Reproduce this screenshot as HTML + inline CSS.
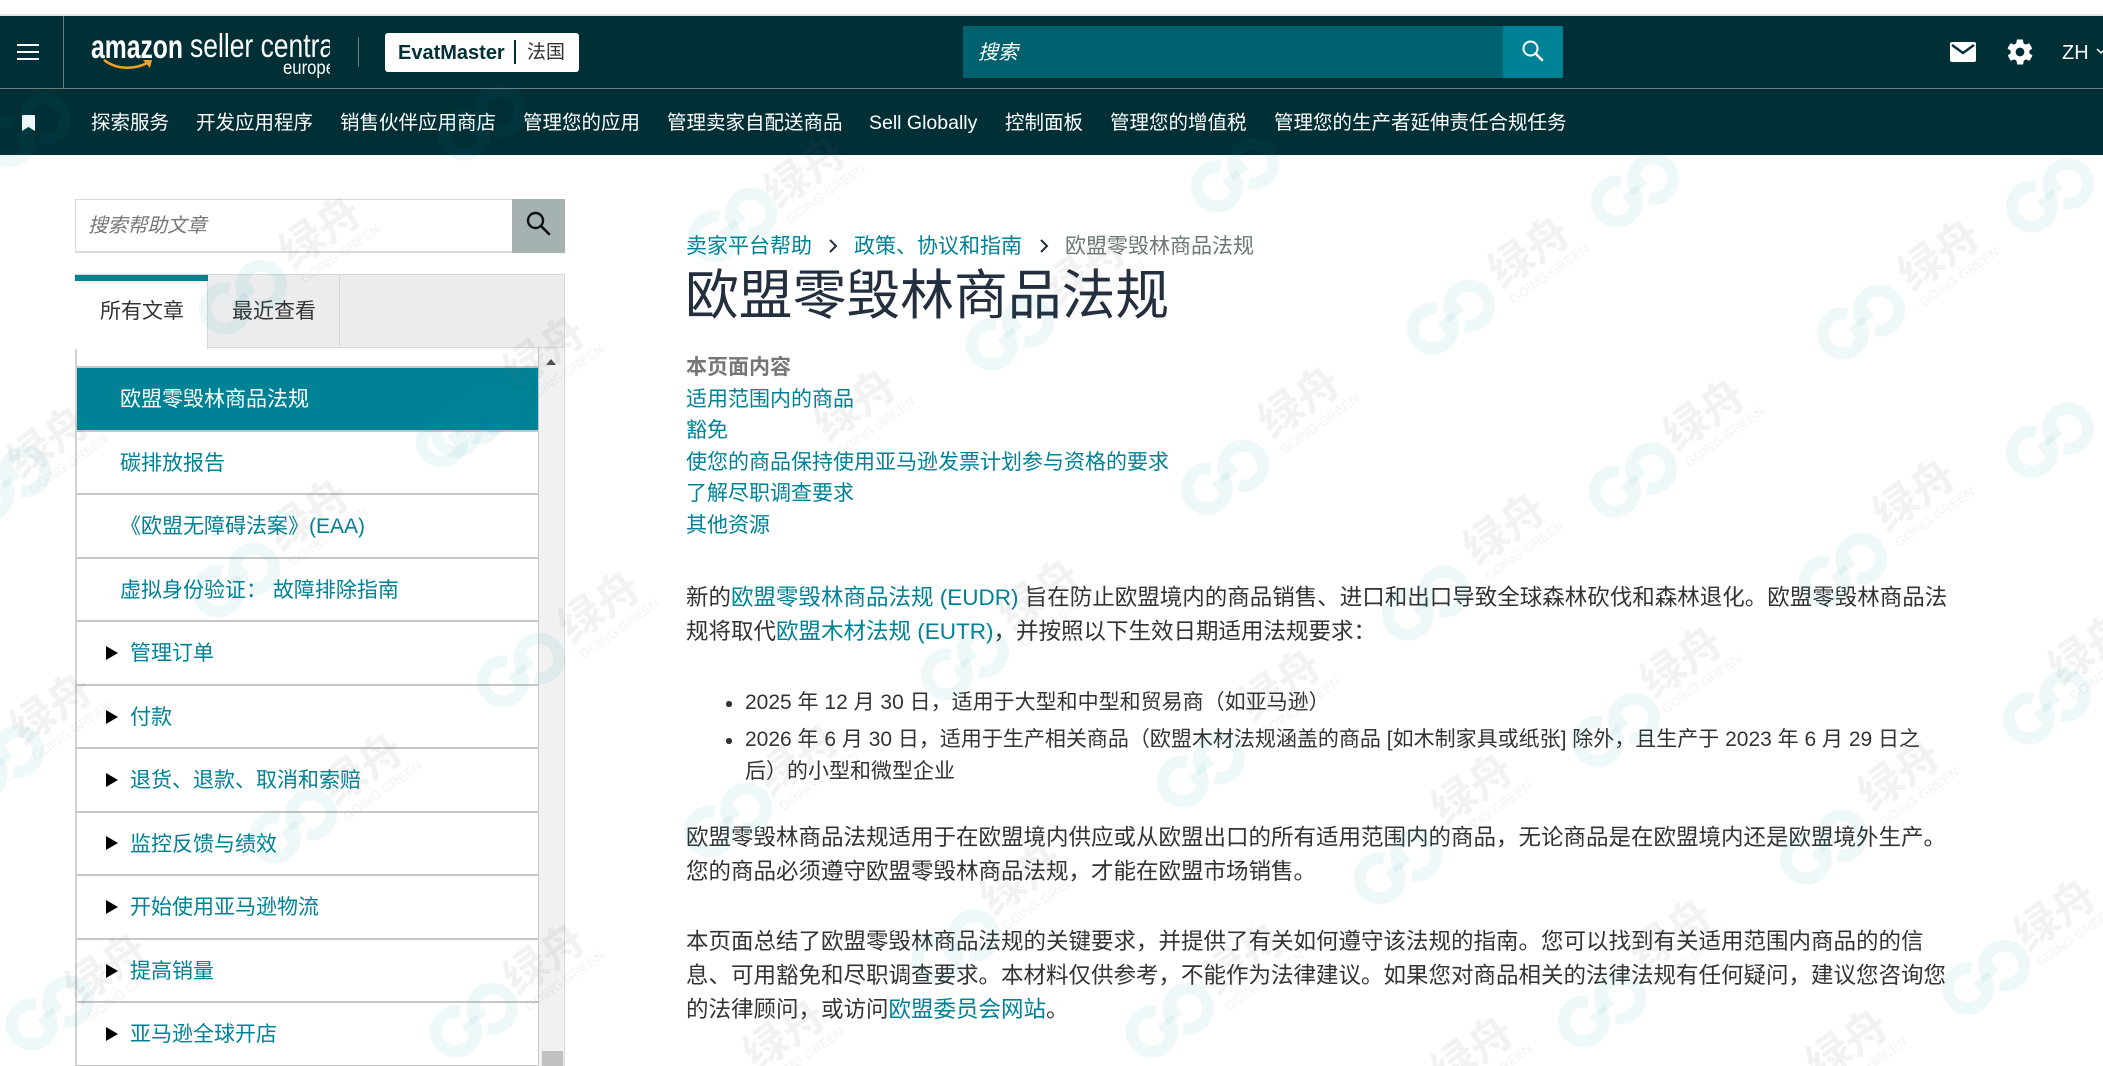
<!DOCTYPE html>
<html lang="zh">
<head>
<meta charset="utf-8">
<title>欧盟零毁林商品法规</title>
<style>
*{box-sizing:border-box}
html,body{margin:0;padding:0;width:2103px;height:1066px;overflow:hidden;background:#fff}
body{position:relative;font-family:"Liberation Sans","Noto Sans CJK SC",sans-serif;color:#333}
a{color:#008296;text-decoration:none}
.abs{position:absolute}
.t{position:absolute;white-space:nowrap;line-height:40px;height:40px;margin-top:1.5px}
.p{font-size:22.5px;left:686px;color:#333;margin-top:.3px}
.b{font-size:21px;left:745px;color:#333;margin-top:1px}
.toc{font-size:21px;left:686px}
.nav{font-size:19.5px;color:#fff;top:102px;margin-top:1px}
.hd{margin-top:.5px}
.sep{position:absolute;left:76px;width:462px;height:2px;background:#c6c8c8}
.it{position:absolute;font-size:21px;white-space:nowrap;line-height:40px;color:#008296;margin-top:1.5px}
.tri{position:absolute;left:106px;width:0;height:0;border-left:12px solid #000;border-top:7px solid transparent;border-bottom:7px solid transparent}
.dot{position:absolute;left:726px;width:5.5px;height:5.5px;border-radius:50%;background:#333}
</style>
</head>
<body>
<!-- top strip -->
<div class="abs" style="left:0;top:14px;width:2103px;height:2px;background:#e6e6e6"></div>
<!-- header -->
<div class="abs" style="left:0;top:16px;width:2103px;height:139px;background:#002f36"></div>
<div class="abs" style="left:0;top:88px;width:2103px;height:1px;background:#6f7f81"></div>
<div class="abs" style="left:63px;top:16px;width:1px;height:72px;background:#6f7f81"></div>
<div class="abs" style="left:17px;top:44px;width:22px;height:2px;background:#fff"></div>
<div class="abs" style="left:17px;top:51px;width:22px;height:2px;background:#fff"></div>
<div class="abs" style="left:17px;top:58px;width:22px;height:2px;background:#fff"></div>
<!-- logo -->
<svg class="abs" style="left:85px;top:30px" width="245" height="48" viewBox="0 0 245 48">
<text x="6" y="28" font-family="Liberation Sans" font-size="33" font-weight="bold" fill="#fff" textLength="92" lengthAdjust="spacingAndGlyphs">amazon</text>
<text x="105" y="27" font-family="Liberation Sans" font-size="33" fill="#fff" textLength="150" lengthAdjust="spacingAndGlyphs">seller central</text>
<text x="198" y="44" font-family="Liberation Sans" font-size="19" fill="#fff" textLength="52" lengthAdjust="spacingAndGlyphs">europe</text>
<path d="M19 30 C32 40 50 40 64 32" fill="none" stroke="#f3a02c" stroke-width="2.6"/>
<path d="M58 30 L67 30 L65 38 Z" fill="#f3a02c"/>
</svg>
<div class="abs" style="left:358px;top:37px;width:1px;height:30px;background:#6f7f81"></div>
<div class="abs" style="left:385px;top:33px;width:194px;height:39px;background:#fff;border-radius:3px"></div>
<div class="t hd" style="left:398px;top:32px;font-size:20px;font-weight:bold;color:#002f36">EvatMaster</div>
<div class="abs" style="left:514px;top:40px;width:1.5px;height:24px;background:#002f36"></div>
<div class="t hd" style="left:527px;top:32px;font-size:19px;color:#333">法国</div>
<!-- top search -->
<div class="abs" style="left:963px;top:26px;width:540px;height:52px;background:#00626f"></div>
<div class="abs" style="left:1503px;top:26px;width:60px;height:52px;background:#008296"></div>
<div class="t hd" style="left:978px;top:32px;font-size:20px;font-style:italic;color:#fff">搜索</div>
<svg class="abs" style="left:1520px;top:38px" width="26" height="26" viewBox="0 0 26 26"><circle cx="10.5" cy="10.5" r="7" fill="none" stroke="#fff" stroke-width="2"/><path d="M15.5 15.5 L22 22" stroke="#fff" stroke-width="2.6" stroke-linecap="round"/></svg>
<!-- right icons -->
<svg class="abs" style="left:1950px;top:42px" width="26" height="20" viewBox="0 0 26 20"><rect width="26" height="20" rx="2" fill="#fff"/><path d="M2 3 L13 11 L24 3" fill="none" stroke="#002f36" stroke-width="2.4"/></svg>
<svg class="abs" style="left:2005px;top:37px" width="30" height="30" viewBox="0 0 24 24"><path fill="#fff" d="M19.4 13c.1-.3.1-.7.1-1s0-.7-.1-1l2.1-1.6c.2-.2.2-.4.1-.6l-2-3.5c-.1-.2-.4-.3-.6-.2l-2.5 1c-.5-.4-1.1-.7-1.7-1l-.4-2.6c0-.3-.2-.5-.5-.5h-4c-.3 0-.5.2-.5.4l-.4 2.7c-.6.2-1.2.6-1.7 1l-2.5-1c-.2-.1-.5 0-.6.2l-2 3.5c-.1.2-.1.5.1.6L4.6 11c-.1.3-.1.7-.1 1s0 .7.1 1l-2.1 1.6c-.2.2-.2.4-.1.6l2 3.5c.1.2.4.3.6.2l2.5-1c.5.4 1.1.7 1.7 1l.4 2.6c0 .3.2.5.5.5h4c.3 0 .5-.2.5-.4l.4-2.7c.6-.2 1.2-.6 1.7-1l2.5 1c.2.1.5 0 .6-.2l2-3.5c.1-.2.1-.5-.1-.6L19.4 13zM12 15.5c-1.9 0-3.5-1.6-3.5-3.5s1.6-3.5 3.5-3.5 3.5 1.6 3.5 3.5-1.6 3.5-3.5 3.5z"/></svg>
<div class="t hd" style="left:2062px;top:32px;font-size:20px;color:#fff">ZH</div>
<svg class="abs" style="left:2096px;top:47px" width="7" height="8" viewBox="0 0 7 8"><path d="M1 2 L5 6 L9 2" fill="none" stroke="#fff" stroke-width="1.5"/></svg>
<!-- nav -->
<svg class="abs" style="left:22px;top:115px" width="13" height="16" viewBox="0 0 13 16"><path d="M0 1 Q0 0 1 0 H12 Q13 0 13 1 V16 L6.5 12 L0 16 Z" fill="#fff"/></svg>
<div class="t nav" style="left:91px">探索服务</div>
<div class="t nav" style="left:196px">开发应用程序</div>
<div class="t nav" style="left:340px">销售伙伴应用商店</div>
<div class="t nav" style="left:523px">管理您的应用</div>
<div class="t nav" style="left:667px">管理卖家自配送商品</div>
<div class="t nav" style="left:869px">Sell Globally</div>
<div class="t nav" style="left:1005px">控制面板</div>
<div class="t nav" style="left:1110px">管理您的增值税</div>
<div class="t nav" style="left:1274px">管理您的生产者延伸责任合规任务</div>

<!-- sidebar search -->
<div class="abs" style="left:75px;top:199px;width:438px;height:54px;border:1.5px solid #d9dcdc;border-bottom:2px solid #d5dbdb;background:#fff"></div>
<div class="abs" style="left:512px;top:199px;width:53px;height:54px;background:#a6b2b1"></div>
<div class="t" style="left:88px;top:204px;font-size:19.8px;font-style:italic;color:#767676">搜索帮助文章</div>
<svg class="abs" style="left:525px;top:210px" width="26" height="26" viewBox="0 0 26 26"><circle cx="10.5" cy="10.5" r="7.5" fill="none" stroke="#0f1111" stroke-width="2.4"/><path d="M16 16 L24 24" stroke="#0f1111" stroke-width="2.6" stroke-linecap="round"/></svg>
<!-- tabs -->
<div class="abs" style="left:75px;top:274px;width:490px;height:74px;background:#eaeced;border:1px solid #d5d9d9"></div>
<div class="abs" style="left:75px;top:275px;width:133px;height:74px;background:#fff;border-right:1px solid #d5d9d9"></div>
<div class="abs" style="left:75px;top:275px;width:133px;height:6px;background:#00818f"></div>
<div class="abs" style="left:339px;top:275px;width:1px;height:73px;background:#d5d9d9"></div>
<div class="t" style="left:100px;top:290px;font-size:21px;color:#333">所有文章</div>
<div class="t" style="left:232px;top:290px;font-size:21px;color:#333">最近查看</div>
<!-- list frame + scrollbar -->
<div class="abs" style="left:75px;top:349px;width:1.5px;height:717px;background:#d0d2d2"></div>
<div class="abs" style="left:538px;top:348px;width:27px;height:718px;background:#f1f1f1;border-left:1px solid #c9cbcb;border-right:1px solid #d5d9d9"></div>
<div class="abs" style="left:545.5px;top:359px;width:0;height:0;border-left:5.5px solid transparent;border-right:5.5px solid transparent;border-bottom:6px solid #505050"></div>
<div class="abs" style="left:542px;top:1051px;width:21px;height:15px;background:#c1c1c1"></div>
<div class="sep" style="top:366px"></div>
<div class="abs" style="left:76.5px;top:368px;width:461.5px;height:62px;background:#008296"></div>
<div class="sep" style="top:430px"></div>
<div class="sep" style="top:493px"></div>
<div class="sep" style="top:556.5px"></div>
<div class="sep" style="top:620px"></div>
<div class="sep" style="top:683.5px"></div>
<div class="sep" style="top:747px"></div>
<div class="sep" style="top:810.5px"></div>
<div class="sep" style="top:874px"></div>
<div class="sep" style="top:937.5px"></div>
<div class="sep" style="top:1001px"></div>
<div class="sep" style="top:1064.5px"></div>
<div class="it" style="left:120px;top:378px;color:#fff">欧盟零毁林商品法规</div>
<div class="it" style="left:120px;top:442px">碳排放报告</div>
<div class="it" style="left:120px;top:505px">《欧盟无障碍法案》(EAA)</div>
<div class="it" style="left:120px;top:569px">虚拟身份验证： 故障排除指南</div>
<div class="tri" style="top:645.5px"></div><div class="it" style="left:130px;top:632px">管理订单</div>
<div class="tri" style="top:709.5px"></div><div class="it" style="left:130px;top:696px">付款</div>
<div class="tri" style="top:772.5px"></div><div class="it" style="left:130px;top:759px">退货、退款、取消和索赔</div>
<div class="tri" style="top:836px"></div><div class="it" style="left:130px;top:823px">监控反馈与绩效</div>
<div class="tri" style="top:899.5px"></div><div class="it" style="left:130px;top:886px">开始使用亚马逊物流</div>
<div class="tri" style="top:963.5px"></div><div class="it" style="left:130px;top:950px">提高销量</div>
<div class="tri" style="top:1026.5px"></div><div class="it" style="left:130px;top:1013px">亚马逊全球开店</div>

<!-- breadcrumb -->
<div class="t toc" style="top:225px"><a href="#">卖家平台帮助</a></div>
<svg class="abs" style="left:828px;top:238px" width="10" height="16" viewBox="0 0 10 16"><path d="M2 2 L8 8 L2 14" fill="none" stroke="#232f3e" stroke-width="2"/></svg>
<div class="t" style="left:854px;top:225px;font-size:21px"><a href="#">政策、协议和指南</a></div>
<svg class="abs" style="left:1039px;top:238px" width="10" height="16" viewBox="0 0 10 16"><path d="M2 2 L8 8 L2 14" fill="none" stroke="#232f3e" stroke-width="2"/></svg>
<div class="t" style="left:1065px;top:225px;font-size:21px;color:#6c7778">欧盟零毁林商品法规</div>
<div class="t" style="left:685px;top:264px;height:60px;line-height:60px;font-size:53.8px;color:#232f3e">欧盟零毁林商品法规</div>
<!-- toc -->
<div class="t toc" style="top:347px;font-weight:bold;font-size:21px;color:#767676;margin-top:.5px">本页面内容</div>
<div class="t toc" style="top:378px"><a href="#">适用范围内的商品</a></div>
<div class="t toc" style="top:409px"><a href="#">豁免</a></div>
<div class="t toc" style="top:441px"><a href="#">使您的商品保持使用亚马逊发票计划参与资格的要求</a></div>
<div class="t toc" style="top:472px"><a href="#">了解尽职调查要求</a></div>
<div class="t toc" style="top:504px"><a href="#">其他资源</a></div>
<!-- body -->
<div class="t p" style="top:578px">新的<a href="#">欧盟零毁林商品法规 (EUDR)</a> 旨在防止欧盟境内的商品销售、进口和出口导致全球森林砍伐和森林退化。欧盟零毁林商品法</div>
<div class="t p" style="top:612px">规将取代<a href="#">欧盟木材法规 (EUTR)</a>，并按照以下生效日期适用法规要求：</div>
<div class="dot" style="top:701px"></div>
<div class="t b" style="top:682px">2025 年 12 月 30 日，适用于大型和中型和贸易商（如亚马逊）</div>
<div class="dot" style="top:738px"></div>
<div class="t b" style="top:719px">2026 年 6 月 30 日，适用于生产相关商品（欧盟木材法规涵盖的商品 [如木制家具或纸张] 除外，且生产于 2023 年 6 月 29 日之</div>
<div class="t b" style="top:751px">后）的小型和微型企业</div>
<div class="t p" style="top:818px">欧盟零毁林商品法规适用于在欧盟境内供应或从欧盟出口的所有适用范围内的商品，无论商品是在欧盟境内还是欧盟境外生产。</div>
<div class="t p" style="top:852px">您的商品必须遵守欧盟零毁林商品法规，才能在欧盟市场销售。</div>
<div class="t p" style="top:922px">本页面总结了欧盟零毁林商品法规的关键要求，并提供了有关如何遵守该法规的指南。您可以找到有关适用范围内商品的的信</div>
<div class="t p" style="top:956px">息、可用豁免和尽职调查要求。本材料仅供参考，不能作为法律建议。如果您对商品相关的法律法规有任何疑问，建议您咨询您</div>
<div class="t p" style="top:990px">的法律顾问，或访问<a href="#">欧盟委员会网站</a>。</div>

<!-- watermark overlay -->
<svg class="abs" style="left:0;top:0;pointer-events:none" width="2103" height="1066" viewBox="0 0 2103 1066">
<defs>
<g id="lg" fill="none" stroke="#0a8fa3" stroke-opacity=".065" stroke-width="12" transform="rotate(-38)">
<path d="M-6 -15 A20 20 0 1 0 -2 3 L-14 3"/>
<path d="M6 15 A20 20 0 1 0 2 -3 L14 -3"/>
</g>
</defs>
<use href="#lg" x="243" y="297"/><use href="#lg" x="474" y="420"/><use href="#lg" x="236" y="580"/><use href="#lg" x="521" y="670"/><use href="#lg" x="293" y="826"/><use href="#lg" x="474" y="1020"/><use href="#lg" x="50" y="1013"/><use href="#lg" x="27" y="130"/><use href="#lg" x="482" y="123"/><use href="#lg" x="7" y="483"/><use href="#lg" x="0" y="763"/><use href="#lg" x="460" y="430"/><use href="#lg" x="733" y="225"/><use href="#lg" x="1010" y="333"/><use href="#lg" x="1235" y="175"/><use href="#lg" x="1451" y="317"/><use href="#lg" x="1635" y="190"/><use href="#lg" x="1861" y="322"/><use href="#lg" x="2050" y="195"/><use href="#lg" x="1225" y="477"/><use href="#lg" x="1633" y="480"/><use href="#lg" x="2050" y="440"/><use href="#lg" x="1426" y="603"/><use href="#lg" x="1843" y="570"/><use href="#lg" x="965" y="663"/><use href="#lg" x="1201" y="770"/><use href="#lg" x="728" y="820"/><use href="#lg" x="1616" y="730"/><use href="#lg" x="2047" y="707"/><use href="#lg" x="1398" y="867"/><use href="#lg" x="1824" y="847"/><use href="#lg" x="956" y="947"/><use href="#lg" x="1170" y="1020"/><use href="#lg" x="1602" y="1010"/><use href="#lg" x="1986" y="977"/>
<g font-family="'Liberation Sans','Noto Sans CJK SC',sans-serif" fill="#666" fill-opacity=".085" text-anchor="middle">
<g transform="translate(326,240) rotate(-35)"><text font-size="44" font-weight="bold" y="5">绿舟</text><text font-size="13" x="4" y="24">GOING GREEN</text></g>
<g transform="translate(54,450) rotate(-35)"><text font-size="44" font-weight="bold" y="5">绿舟</text><text font-size="13" x="4" y="24">GOING GREEN</text></g>
<g transform="translate(550,360) rotate(-35)"><text font-size="44" font-weight="bold" y="5">绿舟</text><text font-size="13" x="4" y="24">GOING GREEN</text></g>
<g transform="translate(314,523) rotate(-35)"><text font-size="44" font-weight="bold" y="5">绿舟</text><text font-size="13" x="4" y="24">GOING GREEN</text></g>
<g transform="translate(605,615) rotate(-35)"><text font-size="44" font-weight="bold" y="5">绿舟</text><text font-size="13" x="4" y="24">GOING GREEN</text></g>
<g transform="translate(57,717) rotate(-35)"><text font-size="44" font-weight="bold" y="5">绿舟</text><text font-size="13" x="4" y="24">GOING GREEN</text></g>
<g transform="translate(368,777) rotate(-35)"><text font-size="44" font-weight="bold" y="5">绿舟</text><text font-size="13" x="4" y="24">GOING GREEN</text></g>
<g transform="translate(112,977) rotate(-35)"><text font-size="44" font-weight="bold" y="5">绿舟</text><text font-size="13" x="4" y="24">GOING GREEN</text></g>
<g transform="translate(550,967) rotate(-35)"><text font-size="44" font-weight="bold" y="5">绿舟</text><text font-size="13" x="4" y="24">GOING GREEN</text></g>
<g transform="translate(811,180) rotate(-35)"><text font-size="44" font-weight="bold" y="5">绿舟</text><text font-size="13" x="4" y="24">GOING GREEN</text></g>
<g transform="translate(1091,277) rotate(-35)"><text font-size="44" font-weight="bold" y="5">绿舟</text><text font-size="13" x="4" y="24">GOING GREEN</text></g>
<g transform="translate(861,413) rotate(-35)"><text font-size="44" font-weight="bold" y="5">绿舟</text><text font-size="13" x="4" y="24">GOING GREEN</text></g>
<g transform="translate(804,767) rotate(-35)"><text font-size="44" font-weight="bold" y="5">绿舟</text><text font-size="13" x="4" y="24">GOING GREEN</text></g>
<g transform="translate(1045,603) rotate(-35)"><text font-size="44" font-weight="bold" y="5">绿舟</text><text font-size="13" x="4" y="24">GOING GREEN</text></g>
<g transform="translate(1286,693) rotate(-35)"><text font-size="44" font-weight="bold" y="5">绿舟</text><text font-size="13" x="4" y="24">GOING GREEN</text></g>
<g transform="translate(1027,887) rotate(-35)"><text font-size="44" font-weight="bold" y="5">绿舟</text><text font-size="13" x="4" y="24">GOING GREEN</text></g>
<g transform="translate(1250,967) rotate(-35)"><text font-size="44" font-weight="bold" y="5">绿舟</text><text font-size="13" x="4" y="24">GOING GREEN</text></g>
<g transform="translate(790,1043) rotate(-35)"><text font-size="44" font-weight="bold" y="5">绿舟</text><text font-size="13" x="4" y="24">GOING GREEN</text></g>
<g transform="translate(1535,260) rotate(-35)"><text font-size="44" font-weight="bold" y="5">绿舟</text><text font-size="13" x="4" y="24">GOING GREEN</text></g>
<g transform="translate(1945,263) rotate(-35)"><text font-size="44" font-weight="bold" y="5">绿舟</text><text font-size="13" x="4" y="24">GOING GREEN</text></g>
<g transform="translate(1710,423) rotate(-35)"><text font-size="44" font-weight="bold" y="5">绿舟</text><text font-size="13" x="4" y="24">GOING GREEN</text></g>
<g transform="translate(1305,410) rotate(-35)"><text font-size="44" font-weight="bold" y="5">绿舟</text><text font-size="13" x="4" y="24">GOING GREEN</text></g>
<g transform="translate(1920,503) rotate(-35)"><text font-size="44" font-weight="bold" y="5">绿舟</text><text font-size="13" x="4" y="24">GOING GREEN</text></g>
<g transform="translate(1510,537) rotate(-35)"><text font-size="44" font-weight="bold" y="5">绿舟</text><text font-size="13" x="4" y="24">GOING GREEN</text></g>
<g transform="translate(1687,670) rotate(-35)"><text font-size="44" font-weight="bold" y="5">绿舟</text><text font-size="13" x="4" y="24">GOING GREEN</text></g>
<g transform="translate(1905,783) rotate(-35)"><text font-size="44" font-weight="bold" y="5">绿舟</text><text font-size="13" x="4" y="24">GOING GREEN</text></g>
<g transform="translate(1478,797) rotate(-35)"><text font-size="44" font-weight="bold" y="5">绿舟</text><text font-size="13" x="4" y="24">GOING GREEN</text></g>
<g transform="translate(2095,657) rotate(-35)"><text font-size="44" font-weight="bold" y="5">绿舟</text><text font-size="13" x="4" y="24">GOING GREEN</text></g>
<g transform="translate(2061,923) rotate(-35)"><text font-size="44" font-weight="bold" y="5">绿舟</text><text font-size="13" x="4" y="24">GOING GREEN</text></g>
<g transform="translate(1677,943) rotate(-35)"><text font-size="44" font-weight="bold" y="5">绿舟</text><text font-size="13" x="4" y="24">GOING GREEN</text></g>
<g transform="translate(1478,1060) rotate(-35)"><text font-size="44" font-weight="bold" y="5">绿舟</text><text font-size="13" x="4" y="24">GOING GREEN</text></g>
<g transform="translate(1853,1053) rotate(-35)"><text font-size="44" font-weight="bold" y="5">绿舟</text><text font-size="13" x="4" y="24">GOING GREEN</text></g>
</g>
</svg>
</body>
</html>
